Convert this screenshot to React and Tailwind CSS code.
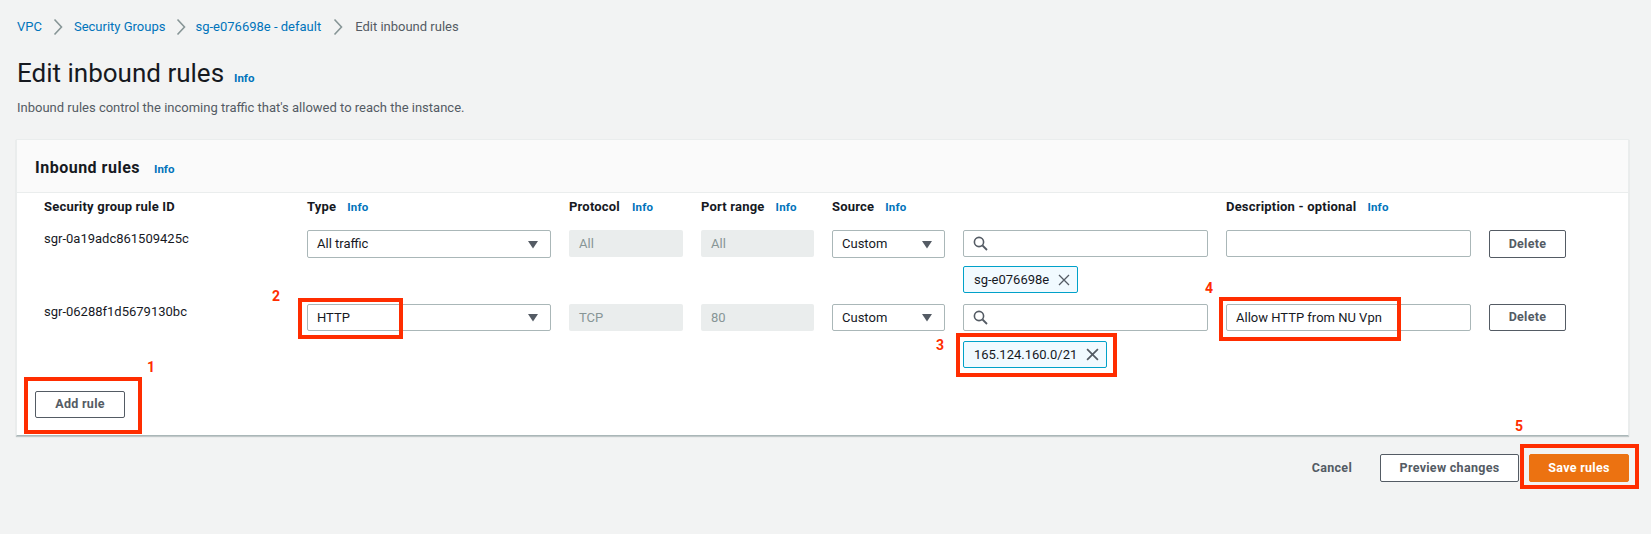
function Info({ className = "" }) {
  return <span className={`text-[11.5px] font-bold text-[#0073bb] ${className}`}>Info</span>;
}

function Crumb({ children, gap = "mx-[11px]" }) {
  return (
    <>
      <span className="text-[#0073bb]">{children}</span>
      <svg width="10" height="18" viewBox="0 0 10 18" className={gap}>
        <path d="M1.5 1.5 L8.5 9 L1.5 16.5" fill="none" stroke="#879596" strokeWidth="1.6" />
      </svg>
    </>
  );
}

function Caret() {
  return (
    <svg width="12" height="9" viewBox="0 0 12 9">
      <path d="M1 1 H11 L6 8.5 Z" fill="#545b64" />
    </svg>
  );
}

function Select({ value, className = "h-[27px]" }) {
  return (
    <div className={`${className} w-full flex items-center justify-between pl-[9px] pr-[11px] bg-white border border-[#aab7b8] rounded-[2px]`}>
      <span>{value}</span>
      <Caret />
    </div>
  );
}

function Disabled({ value }) {
  return (
    <div className="h-[27px] w-full flex items-center pl-[10px] bg-[#eaeded] text-[#879596] rounded-[2px]">
      {value}
    </div>
  );
}

function SearchBox() {
  return (
    <div className="h-[27px] w-full flex items-center pl-[9px] bg-white border border-[#aab7b8] rounded-[2px]">
      <svg width="15" height="15" viewBox="0 0 15 15">
        <circle cx="6" cy="6" r="4.6" fill="none" stroke="#545b64" strokeWidth="1.6" />
        <path d="M9.5 9.5 L14 14" stroke="#545b64" strokeWidth="1.8" />
      </svg>
    </div>
  );
}

function Chip({ label, className = "", xSize = 12, xWeight = 1.3 }) {
  return (
    <div className={`h-[27px] flex items-center justify-between pl-[10px] pr-[7px] bg-[#f1faff] border border-[#00a1c9] rounded-[2px] ${className}`}>
      <span>{label}</span>
      <svg width={xSize} height={xSize} viewBox="0 0 12 12">
        <path d="M1 1 L11 11 M11 1 L1 11" stroke="#545b64" strokeWidth={xWeight} />
      </svg>
    </div>
  );
}

function Button({ children, className = "", height = "h-[27px]" }) {
  return (
    <div className={`${height} flex items-center justify-center text-[12.5px] font-bold tracking-[0.3px] border rounded-[2px] ${className}`}>
      {children}
    </div>
  );
}

const outline = "text-[#545b64] bg-white border-[#545b64]";

function Mark({ className }) {
  return <div className={`absolute border-[4px] border-[#ff2d00] ${className}`}></div>;
}

function Num({ className, children }) {
  return <div className={`absolute text-[14px] leading-none font-bold text-[#ff2d00] ${className}`}>{children}</div>;
}

export default function App() {
  return (
    <div className="relative w-[1651px] h-[534px] overflow-hidden bg-[#f2f3f3] text-[13px] text-[#16191f] font-['Roboto',sans-serif]">
      <div className="px-[17px] pt-[17px]">
        <div className="flex items-center h-[19px] text-[13px] text-[#545b64]">
          <Crumb>VPC</Crumb>
          <Crumb gap="ml-[11px] mr-[9px]">Security Groups</Crumb>
          <Crumb gap="ml-[12px] mr-[12px]">sg-e076698e - default</Crumb>
          <span>Edit inbound rules</span>
        </div>
        <div className="flex items-baseline gap-[10px] mt-[19px] h-[36px]">
          <h1 className="text-[26px] leading-[36px] font-normal">Edit inbound rules</h1>
          <Info />
        </div>
        <p className="mt-[8px] text-[13px] leading-[18px] text-[#545b64]">
          Inbound rules control the incoming traffic that's allowed to reach the instance.
        </p>
      </div>

      <div className="mx-[16px] mt-[22px] w-[1613px] h-[297px] bg-white border border-[#eaeded] border-b-[#aab7b8] shadow-[0_1px_1px_rgba(0,28,36,0.2)]">
        <div className="h-[53px] flex items-baseline gap-[14px] pl-[18px] pt-[16px] bg-[#fafafa] border-b border-[#eaeded]">
          <h2 className="text-[16px] font-bold tracking-[0.5px]">Inbound rules</h2>
          <Info />
        </div>

        <div className="grid grid-cols-[245px_244px_114px_113px_113px_245px_245px_77px] gap-x-[18px] pl-[27px] items-start">
          <div className="col-span-8 grid grid-cols-subgrid h-[37px] items-center font-bold text-[13px] tracking-[0.2px] pb-[10px]">
            <span>Security group rule ID</span>
            <span>Type<Info className="ml-[11px]" /></span>
            <span>Protocol<Info className="ml-[12px]" /></span>
            <span>Port range<Info className="ml-[11px]" /></span>
            <span>Source<Info className="ml-[11px]" /></span>
            <span></span>
            <span>Description - optional<Info className="ml-[11px]" /></span>
            <span></span>
          </div>

          <div className="leading-[18px]">sgr-0a19adc861509425c</div>
          <Select value="All traffic" className="h-[28px]" />
          <Disabled value="All" />
          <Disabled value="All" />
          <Select value="Custom" className="h-[28px]" />
          <div>
            <SearchBox />
            <Chip label="sg-e076698e" className="w-[115px] mt-[9px]" />
          </div>
          <div className="h-[27px] bg-white border border-[#aab7b8] rounded-[2px]"></div>
          <Button height="h-[28px]" className={outline}>Delete</Button>

          <div className="leading-[18px] mt-[10px]">sgr-06288f1d5679130bc</div>
          <div className="mt-[11px]"><Select value="HTTP" /></div>
          <div className="mt-[11px]"><Disabled value="TCP" /></div>
          <div className="mt-[11px]"><Disabled value="80" /></div>
          <div className="mt-[11px]"><Select value="Custom" /></div>
          <div className="mt-[11px]">
            <SearchBox />
            <Chip label="165.124.160.0/21" className="w-[144px] mt-[10px]" xSize={13} xWeight={1.6} />
          </div>
          <div className="mt-[11px] h-[27px] flex items-center pl-[9px] bg-white border border-[#aab7b8] rounded-[2px]">
            Allow HTTP from NU Vpn
          </div>
          <div className="mt-[11px]"><Button className={outline}>Delete</Button></div>
        </div>

        <div className="pl-[18px] mt-[23px]">
          <Button className={`w-[90px] ${outline}`}>Add rule</Button>
        </div>
      </div>

      <div className="flex items-center justify-end mt-[18px] pr-[22px]">
        <span className="text-[12.5px] font-bold text-[#545b64] tracking-[0.3px] mr-[28px]">Cancel</span>
        <Button height="h-[28px]" className={`w-[139px] ${outline}`}>Preview changes</Button>
        <Button height="h-[28px]" className="w-[100px] ml-[10px] bg-[#ec7211] border-[#ec7211] text-white">Save rules</Button>
      </div>

      <Mark className="left-[24px] top-[377px] w-[118px] h-[57px]" />
      <Mark className="left-[298px] top-[298px] w-[105px] h-[41px]" />
      <Mark className="left-[956px] top-[333px] w-[161px] h-[44px]" />
      <Mark className="left-[1219px] top-[297px] w-[182px] h-[44px]" />
      <Mark className="left-[1520px] top-[444px] w-[119px] h-[45px]" />
      <Num className="left-[147px] top-[360px]">1</Num>
      <Num className="left-[272px] top-[289px]">2</Num>
      <Num className="left-[936px] top-[338px]">3</Num>
      <Num className="left-[1205px] top-[281px]">4</Num>
      <Num className="left-[1515px] top-[419px]">5</Num>
    </div>
  );
}
